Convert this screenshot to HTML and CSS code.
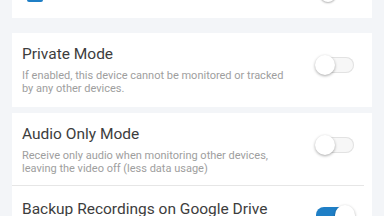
FILE: index.html
```html
<!DOCTYPE html>
<html>
<head>
<meta charset="utf-8">
<link rel="stylesheet" href="styles.css">
</head>
<body>
<div class="page">
  <div class="card card-top">
    <div class="top-row">
      <span class="checkbox"></span>
      <span class="thumb-peek"></span>
    </div>
  </div>

  <div class="card card-private">
    <div class="row">
      <div class="text">
        <div class="title">Private Mode</div>
        <div class="desc">If enabled, this device cannot be monitored or tracked by any other devices.</div>
      </div>
      <span class="switch"><span class="knob"></span></span>
    </div>
  </div>

  <div class="card card-group">
    <div class="row row-divided">
      <div class="text">
        <div class="title">Audio Only Mode</div>
        <div class="desc">Receive only audio when monitoring other devices, leaving the video off (less data usage)</div>
      </div>
      <span class="switch"><span class="knob"></span></span>
    </div>
    <div class="row row-last">
      <div class="text">
        <div class="title">Backup Recordings on Google Drive</div>
      </div>
      <span class="switch on"><span class="knob"></span></span>
    </div>
  </div>
</div>
</body>
</html>
```
FILE: styles.css
```css
html, body {
  margin: 0;
  padding: 0;
}
body {
  width: 384px;
  height: 216px;
  overflow: hidden;
  background: #f3f5f8;
  font-family: Roboto, "Noto Sans", sans-serif;
}
.page {
  padding: 0 12px;
  display: flex;
  flex-direction: column;
}
.card {
  background: #ffffff;
}
.card-top {
  height: 18px;
  overflow: hidden;
}
.top-row {
  display: flex;
  justify-content: space-between;
  align-items: flex-start;
  padding: 0 36px 0 15px;
}
.checkbox {
  width: 16px;
  height: 16px;
  margin-top: -14px;
  background: #1f7fc6;
  border-radius: 2px;
}
.thumb-peek {
  width: 16px;
  height: 16px;
  margin-top: -14px;
  border-radius: 50%;
  background: #fff;
  box-shadow: 0 1px 2px rgba(0,0,0,0.3);
}
.card-private {
  margin-top: 15px;
  height: 74px;
}
.card-group {
  margin-top: 6px;
}
.row {
  display: flex;
  align-items: center;
  justify-content: space-between;
  padding: 12px 18px 0 10px;
}
.card-private .row {
  height: 62px;
  align-items: flex-start;
}
.row-divided {
  height: 60px;
  align-items: flex-start;
  border-bottom: 1px solid #e6e6e6;
  margin: 0 8px 0 0;
  padding-right: 10px;
}
.row-last {
  padding-top: 14px;
  align-items: flex-start;
}
.text {
  display: flex;
  flex-direction: column;
  gap: 7px;
}
.title {
  font-size: 15.5px;
  line-height: 18px;
  color: #3d3d3d;
}
.desc {
  font-size: 11px;
  line-height: 12.5px;
  color: #9e9e9e;
  width: 272px;
}
.switch {
  position: relative;
  flex: none;
  width: 38px;
  height: 16px;
  margin-top: 12px;
  border-radius: 8px;
  background: #f7f7f7;
  box-shadow: inset 0 0 0 1px #e2e2e2;
}
.switch .knob {
  position: absolute;
  left: -1px;
  top: -2px;
  width: 20px;
  height: 20px;
  border-radius: 50%;
  background: #ffffff;
  box-shadow: 0 1px 3px rgba(0,0,0,0.35);
}
.switch.on {
  background: #1f7fc6;
  box-shadow: none;
  margin-top: 7px;
}
.switch.on .knob {
  left: auto;
  right: -1px;
}
```
